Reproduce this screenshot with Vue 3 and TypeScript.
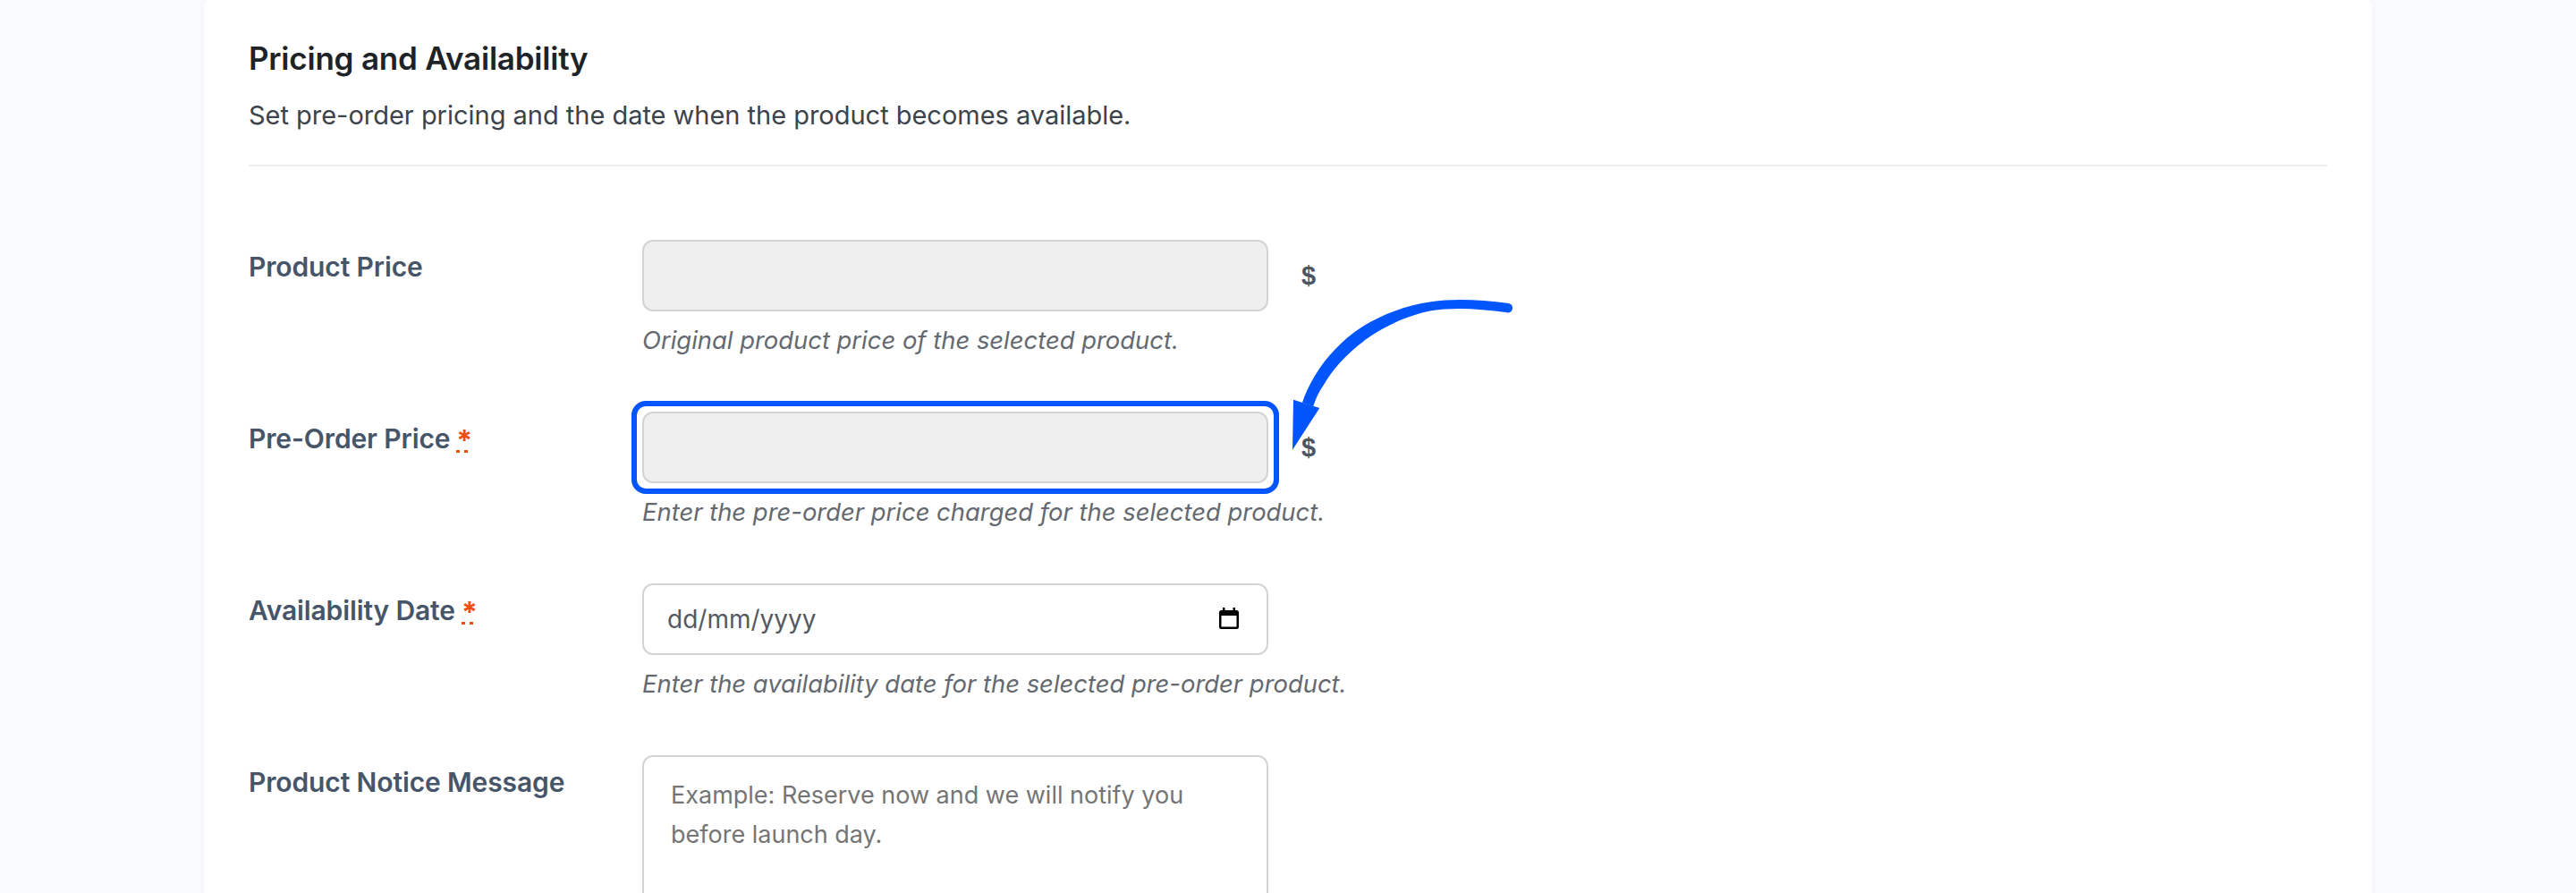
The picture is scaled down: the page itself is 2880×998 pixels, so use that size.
<script setup lang="ts">
interface Row {
  label: string
  required: boolean
  hint: string
  kind: 'price' | 'date' | 'notice'
  highlighted?: boolean
}
const rows: Row[] = [
  { label: 'Product Price', required: false, hint: 'Original product price of the selected product.', kind: 'price' },
  { label: 'Pre-Order Price', required: true, hint: 'Enter the pre-order price charged for the selected product.', kind: 'price', highlighted: true },
  { label: 'Availability Date', required: true, hint: 'Enter the availability date for the selected pre-order product.', kind: 'date' },
  { label: 'Product Notice Message', required: false, hint: '', kind: 'notice' },
]
</script>

<template>
  <div class="page">
    <section class="card">
      <h2 class="title">Pricing and Availability</h2>
      <p class="desc">Set pre-order pricing and the date when the product becomes available.</p>
      <div class="rule"></div>
      <div class="rows">
        <div v-for="row in rows" :key="row.label" class="row">
          <label class="label">{{ row.label }}<abbr v-if="row.required" class="req">*</abbr></label>
          <div class="field">
            <template v-if="row.kind === 'price'">
              <div class="line">
                <div class="input-wrap" :class="{ marked: row.highlighted }">
                  <input class="input disabled" type="text" disabled />
                </div>
                <span class="currency">$</span>
              </div>
            </template>
            <div v-else-if="row.kind === 'date'" class="input-wrap">
              <input class="input date" type="text" placeholder="dd/mm/yyyy" readonly />
              <svg class="cal" viewBox="0 0 22 24" width="22" height="24" aria-hidden="true">
                <path d="M4 0h2.500v3h9V0H18v3h1.500A2.500 2.500 0 0 1 22 5.500v16a2.500 2.500 0 0 1-2.500 2.500h-17A2.500 2.500 0 0 1 0 21.500v-16A2.500 2.500 0 0 1 2.500 3H4zM2.500 9v12.500h17V9z" fill="#000" fill-rule="evenodd" />
              </svg>
            </div>
            <textarea v-else class="notice" placeholder="Example: Reserve now and we will notify you before launch day."></textarea>
            <p v-if="row.hint" class="hint">{{ row.hint }}</p>
          </div>
        </div>
      </div>
      <svg class="arrow" viewBox="0 0 260 180" width="260" height="180" aria-hidden="true">
        <path d="M246.700 9C215 5 185 3.500 160 7.300C130 11.500 105 22 83.300 35C60 50 42 70 30 90C24 100 19 110 16 120L28.300 124C31 115 35 107 40 100C50 82 68 62 93.300 45C112 33 135 22 160 17.300C185 13 215 15 245 19.300A5.200 5.200 0 0 0 246.700 9Z" fill="#0055fd" />
        <path d="M6 116.700L35.300 126L5 172.700Z" fill="#0055fd" />
      </svg>
    </section>
  </div>
</template>

<style scoped>
.page {
  height: 998px;
  overflow: hidden;
  background: #fafbfd;
  font-family: Inter, "Liberation Sans", sans-serif;
}
.card {
  position: relative;
  width: 2424px;
  height: 1100px;
  margin: -6px auto 0;
  padding: 43px 50px 0;
  box-sizing: border-box;
  background: #fff;
  border-radius: 16px;
  box-shadow: 0 0 12px rgba(30, 50, 90, 0.03);
}
.title {
  margin: 0;
  font-size: 35px;
  line-height: 56px;
  font-weight: 600;
  letter-spacing: -0.22px;
  color: #1d2327;
}
.desc {
  margin: 14px 0 0;
  font-size: 29px;
  line-height: 44px;
  font-weight: 400;
  letter-spacing: -0.02px;
  color: #3c434a;
}
.rule {
  height: 2px;
  margin-top: 33px;
  background: #eeeeee;
}
.rows {
  display: flex;
  flex-direction: column;
  margin-top: 82px;
}
.row {
  display: flex;
  height: 192px;
}
.label {
  flex: 0 0 440px;
  font-size: 30px;
  line-height: 60px;
  font-weight: 600;
  letter-spacing: -0.12px;
  color: #475569;
}
.req {
  display: inline-block;
  width: 16px;
  height: 33px;
  margin-left: 7px;
  vertical-align: top;
  margin-top: 13px;
  font-size: 32px;
  line-height: 40px;
  font-weight: 700;
  text-align: center;
  color: #f04e0a;
  background: linear-gradient(90deg, #f04e0a 4px, transparent 4px) 0 100% / 9px 3px repeat-x;
}
.field {
  flex: 1;
}
.line {
  display: flex;
  align-items: center;
  gap: 37px;
}
.input-wrap {
  position: relative;
  width: 700px;
}
.input-wrap.marked::after {
  content: "";
  position: absolute;
  inset: -12px;
  border: 6px solid #0055fd;
  border-radius: 16px;
  pointer-events: none;
}
.input {
  display: block;
  box-sizing: border-box;
  width: 100%;
  height: 80px;
  padding: 0 26px;
  border: 2px solid #d2d4d7;
  border-radius: 12px;
  outline: none;
  background: #fff;
  font-family: inherit;
  font-size: 28px;
}
.input.disabled {
  background: #efefef;
}
.input.date::placeholder {
  color: #55595f;
  opacity: 1;
}
.cal {
  position: absolute;
  top: 27px;
  right: 33px;
}
.currency {
  font-family: "Liberation Sans", Arial, sans-serif;
  font-size: 29px;
  font-weight: 700;
  color: #4b5563;
}
.hint {
  margin: 12px 0 0;
  font-size: 27.4px;
  line-height: 40px;
  font-style: italic;
  color: #646970;
}
.notice {
  display: block;
  box-sizing: border-box;
  width: 700px;
  height: 300px;
  padding: 21px 30px;
  border: 2px solid #d2d4d7;
  border-radius: 12px;
  outline: none;
  resize: none;
  background: #fff;
  font-family: inherit;
  font-size: 27px;
  line-height: 44px;
}
.notice::placeholder {
  color: #757575;
  opacity: 1;
}
.arrow {
  position: absolute;
  left: 1212px;
  top: 336px;
  pointer-events: none;
}
</style>

<style>
body {
  margin: 0;
}
</style>
